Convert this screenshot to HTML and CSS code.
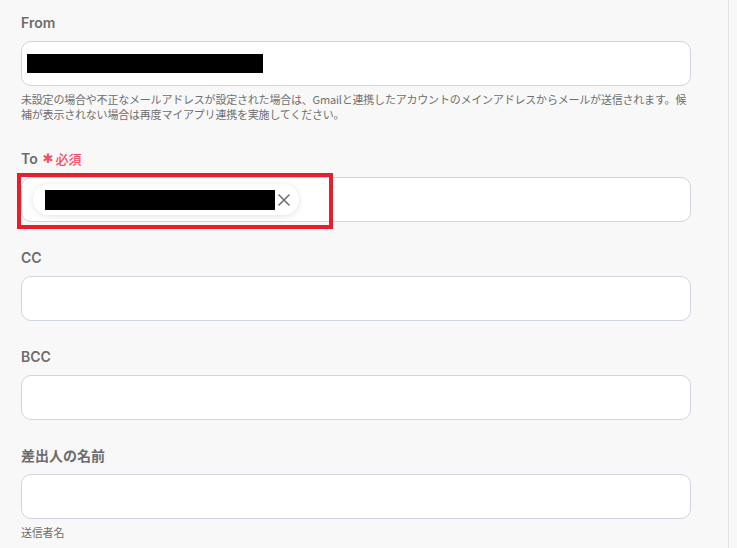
FILE: index.html
```html
<!DOCTYPE html>
<html lang="ja">
<head>
<meta charset="utf-8">
<link rel="stylesheet" href="styles.css">
</head>
<body>
<div class="panel">
  <div class="field field-from">
    <div class="label">From</div>
    <div class="input"><span class="redact redact-from"></span></div>
    <p class="help">未設定の場合や不正なメールアドレスが設定された場合は、Gmailと連携したアカウントのメインアドレスからメールが送信されます。候補が表示されない場合は再度マイアプリ連携を実施してください。</p>
  </div>
  <div class="field">
    <div class="label">To <span class="req"><span class="ast">✱</span>必須</span></div>
    <div class="input input-to">
      <div class="chip">
        <span class="redact redact-chip"></span>
        <svg class="x" width="14" height="14" viewBox="0 0 14 14"><path d="M2 2L12 12M12 2L2 12" stroke="#6f6f6f" stroke-width="1.6" stroke-linecap="round" fill="none"/></svg>
      </div>
      <div class="highlight"></div>
    </div>
  </div>
  <div class="field">
    <div class="label">CC</div>
    <div class="input"></div>
  </div>
  <div class="field">
    <div class="label">BCC</div>
    <div class="input"></div>
  </div>
  <div class="field">
    <div class="label">差出人の名前</div>
    <div class="input"></div>
    <p class="help">送信者名</p>
  </div>
</div>
</body>
</html>
```
FILE: styles.css
```css
html, body {
  margin: 0;
  padding: 0;
  background: #f8f8f8;
  height: 100%;
  overflow: hidden;
}
body {
  font-family: Inter, "Noto Sans CJK JP", sans-serif;
}
.panel {
  width: 729px;
  height: 548px;
  box-sizing: border-box;
  border-right: 1px solid #e3e3e3;
  padding: 13px 0 0 21px;
}
.field {
  width: 670px;
  margin-bottom: 26px;
}
.field-from {
  margin-bottom: 27px;
}
.label {
  height: 20px;
  font-size: 14px;
  line-height: 20px;
  font-weight: 600;
  color: #6c6c6c;
  margin-bottom: 8px;
  display: flex;
  align-items: center;
  gap: 5px;
}
.req {
  color: #f0505f;
  font-family: "Noto Sans CJK JP", sans-serif;
  font-size: 13px;
  font-weight: 500;
  line-height: 20px;
  display: flex;
  align-items: center;
}
.ast {
  font-family: "DejaVu Sans", sans-serif;
  font-size: 13px;
  font-weight: 700;
  margin-right: 2px;
}
.input {
  height: 45px;
  box-sizing: border-box;
  background: #fff;
  border: 1px solid #cfd5de;
  border-radius: 10px;
  display: flex;
  align-items: center;
}
.redact {
  display: block;
  background: #000;
}
.redact-from {
  width: 236px;
  height: 19px;
  margin-left: 5px;
}
.input-to {
  position: relative;
  padding-left: 11px;
}
.chip {
  display: flex;
  align-items: center;
  height: 31px;
  width: 266px;
  box-sizing: border-box;
  padding-left: 12px;
  background: #fff;
  border-radius: 16px;
  box-shadow: 0 1px 6px rgba(0, 0, 0, 0.12);
}
.redact-chip {
  width: 230px;
  height: 20px;
}
.x {
  margin-left: 2px;
}
.highlight {
  position: absolute;
  left: -5px;
  top: -5px;
  width: 316px;
  height: 56px;
  box-sizing: border-box;
  border: 4px solid #e81e2a;
}
.help {
  margin: 6px 0 0;
  font-family: "Noto Sans CJK JP", sans-serif;
  font-size: 11px;
  line-height: 15px;
  color: #6f6f6f;
  letter-spacing: -0.2px;
}
```
